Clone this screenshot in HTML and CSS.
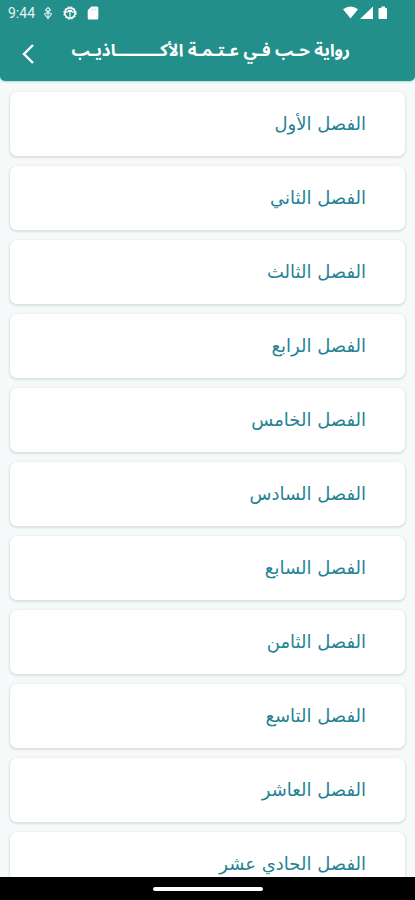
FILE: index.html
```html
<!DOCTYPE html>
<html lang="ar" dir="rtl">
<head>
<meta charset="utf-8">
<meta name="viewport" content="width=device-width, initial-scale=1">
<title>رواية حب في عتمة الأكاذيب</title>
<link rel="stylesheet" href="styles.css">
</head>
<body>
<div class="app">
  <header class="header">
    <div class="status" dir="ltr">
      <span class="time">9:44</span>
      <svg class="status-icon small" viewBox="0 0 10 14" aria-hidden="true"><path d="M5 1.500 7.500 4 5 6.500 2.500 4ZM1.500 8 5 6.500 8.500 8 5 12.500ZM5 4v8" fill="none" stroke="#d5ecea" stroke-width="1.2"/></svg>
      <svg class="status-icon" viewBox="0 0 14 14" aria-hidden="true"><circle cx="7" cy="7" r="5.2" fill="none" stroke="#fff" stroke-width="1.7"/><circle cx="7" cy="7" r="6.3" fill="none" stroke="#fff" stroke-width="1" stroke-dasharray="1.6 1.7"/><path d="M3 6.4 7 5l4 1.4M7 5v6M5 4.300h4" fill="none" stroke="#fff" stroke-width="1.200"/></svg>
      <svg class="status-icon card-icon" viewBox="0 0 12 14" aria-hidden="true"><path d="M4.500.5H10a1.300 1.300 0 0 1 1.300 1.300v10.400a1.300 1.300 0 0 1-1.300 1.300H2a1.300 1.300 0 0 1-1.300-1.300V4.300Z" fill="#fff"/><path d="M4.800 2.500v2M6.800 2.500v2M8.800 2.500v2" stroke="#9fd0cc" stroke-width=".8"/></svg>
      <span class="spacer"></span>
      <svg class="radio-icons" viewBox="0 0 46 14" aria-hidden="true"><path d="M0 3.200Q7.500-2.400 15 3.200L7.500 12.500ZM30 .5V13H17ZM36.500 2h2V.5h3.500V2h1q1 0 1 1v9q0 1-1 1h-6.500q-1 0-1-1V3q0-1 1-1Z" fill="#fff"/></svg>
    </div>
    <div class="bar">
      <h1 class="title">رواية حـب فـي عـتـمـة الأكـــــــــاذيـب</h1>
      <button class="back" type="button" aria-label="رجوع"><svg viewBox="0 0 14 22" aria-hidden="true"><path d="M12 2 3 11l9 9" fill="none" stroke="#fff" stroke-width="2.400"/></svg></button>
    </div>
  </header>
  <main class="content">
    <ul class="chapters">
      <li><a class="chapter" href="#1">الفصل الأول</a></li>
      <li><a class="chapter" href="#2">الفصل الثاني</a></li>
      <li><a class="chapter" href="#3">الفصل الثالث</a></li>
      <li><a class="chapter" href="#4">الفصل الرابع</a></li>
      <li><a class="chapter" href="#5">الفصل الخامس</a></li>
      <li><a class="chapter" href="#6">الفصل السادس</a></li>
      <li><a class="chapter" href="#7">الفصل السابع</a></li>
      <li><a class="chapter" href="#8">الفصل الثامن</a></li>
      <li><a class="chapter" href="#9">الفصل التاسع</a></li>
      <li><a class="chapter" href="#10">الفصل العاشر</a></li>
      <li><a class="chapter" href="#11">الفصل الحادي عشر</a></li>
    </ul>
  </main>
  <footer class="nav"><span class="handle"></span></footer>
</div>
</body>
</html>
```
FILE: styles.css
```css
* { box-sizing: border-box; }
body {
  margin: 0;
  background: #f5f9fa;
  font-family: "DejaVu Sans", sans-serif;
}
.app {
  display: flex;
  flex-direction: column;
  height: 100vh;
}
.header {
  flex: none;
  background: #228f8b;
  border-radius: 0 0 5px 5px;
  box-shadow: 0 1px 2px #b9d5d5;
}
.status {
  display: flex;
  align-items: center;
  height: 26px;
  padding: 0 26px 0 8px;
}
.time {
  color: #e4f3f2;
  font: 14px/26px Roboto, sans-serif;
}
.status-icon { width: 14px; height: 14px; margin-left: 10px; }
.status-icon.small { width: 10px; margin-left: 8px; }
.status-icon.card-icon { width: 12px; }
.spacer { flex: 1; }
.radio-icons { width: 46px; height: 14px; }
.bar {
  display: flex;
  align-items: center;
  justify-content: space-between;
  height: 55px;
  padding: 0 65px 0 21px;
}
.title {
  margin: 0;
  padding-bottom: 6px;
  color: #fff;
  font-family: "Noto Sans Arabic", sans-serif;
  font-size: 17px;
  line-height: 32px;
  white-space: nowrap;
}
.back {
  display: flex;
  padding: 0;
  border: 0;
  background: none;
}
.back svg { width: 14px; height: 22px; }
.content {
  flex: 1;
  min-height: 0;
  overflow: hidden;
  padding: 11px 10px 0;
}
.chapters {
  display: flex;
  flex-direction: column;
  gap: 10px;
  margin: 0;
  padding: 0;
  list-style: none;
}
.chapter {
  display: block;
  height: 64px;
  padding: 16px 39px;
  border-radius: 7px;
  background: #fff;
  box-shadow: 0 1px 2px 1px #dce1e2;
  color: #1f8394;
  font-size: 18px;
  line-height: 32px;
  text-decoration: none;
}
.nav {
  display: flex;
  flex: none;
  align-items: center;
  justify-content: center;
  height: 23px;
  background: #000;
}
.handle {
  width: 110px;
  height: 4px;
  border-radius: 2px;
  background: #fff;
}
```
